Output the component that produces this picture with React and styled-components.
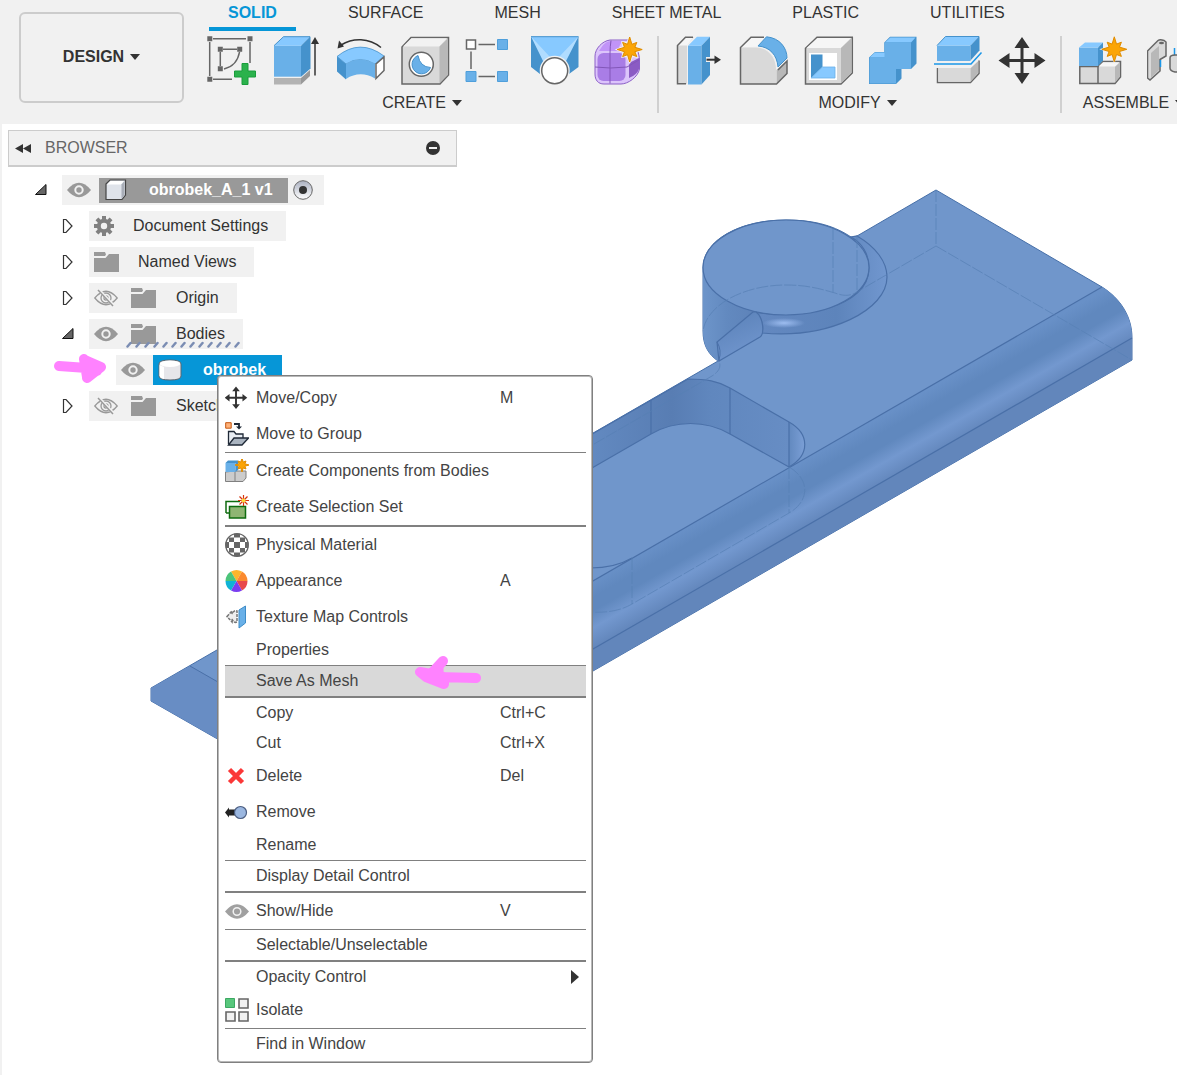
import React from 'react'
import styled, { createGlobalStyle, css } from 'styled-components'

const GlobalStyle = createGlobalStyle`
  * {
    box-sizing: border-box;
  }
  body {
    margin: 0;
    background: #fff;
    color: #333;
    font-family: 'Liberation Sans', Arial, sans-serif;
    font-size: 16px;
    line-height: 20px;
  }
  button {
    font: inherit;
    color: inherit;
    border: 0;
    padding: 0;
    background: none;
  }
  ul {
    list-style: none;
    margin: 0;
    padding: 0;
  }
  svg {
    display: block;
  }
`

/* ---------- toolbar icons ---------- */

const starPoints = (cx, cy, outer, inner) =>
  Array.from({ length: 16 }, (_, i) => {
    const r = i % 2 ? inner : i % 4 ? outer * 0.8 : outer
    const a = (Math.PI / 8) * i - Math.PI / 2
    return `${(cx + r * Math.cos(a)).toFixed(1)},${(cy + r * Math.sin(a)).toFixed(1)}`
  }).join(' ')

const Star = ({ cx, cy, r = 12 }) => (
  <polygon
    points={starPoints(cx, cy, r, r * 0.45)}
    fill='#fba506'
    stroke='#e08c00'
    strokeWidth='1'
  />
)

const SketchIcon = () => (
  <>
    <path
      d='M6 2.7H39M2.7 6V40M43 6V27M6 43.3H25M16 13.3H30M13.3 16V30M32.5 16C31 25 25 31 17 33'
      stroke='#666'
      strokeWidth='1.5'
      fill='none'
    />
    <path
      d='M.3.3h5v5h-5zM40.5.3h5v5h-5zM.3 40.8h5v5h-5zM10.8 10.8h5v5h-5zM30.2 10.8h5v5h-5zM10.8 30.2h5v5h-5z'
      fill='#666'
    />
    <path
      d='M35 27.5h6V35h7.5v6H41v7.5h-6V41h-7.5v-6H35z'
      fill='#2bb24c'
      stroke='#1a9c3c'
    />
  </>
)

const ExtrudeIcon = () => (
  <>
    <path d='M2 42h27v6.5H2z' fill='#b3b3b3' />
    <path d='M29 42l9-8v6l-9 8.500z' fill='#999' />
    <path d='M2 9.7h27v31H2z' fill='#69b0e8' />
    <path d='M2 9.7L11.5.7H38L29 9.7z' fill='#87c9ff' />
    <path d='M29 9.7L38 .7V33l-9 7.700z' fill='#4592cc' />
    <path d='M2 9.7L11.5.7H38V33' fill='none' stroke='#4592cc' />
    <path d='M43 39.5V6' stroke='#333' strokeWidth='1.5' />
    <path d='M43 1l4 7h-8z' fill='#333' />
  </>
)

const RevolveIcon = () => (
  <>
    <path
      d='M45 11.5C33 1.5 17 1.5 5 9'
      fill='none'
      stroke='#333'
      strokeWidth='1.5'
    />
    <path d='M1.5 12.5l1.500-8 5 6z' fill='#333' />
    <path
      d='M1 20.5Q24 2 48 20L39 28Q24 19 10 28z'
      fill='#87c9ff'
      stroke='#4592cc'
      strokeWidth='.8'
    />
    <path d='M10 28Q24 19 39 28V42.5Q24 34 10 43z' fill='#69b0e8' />
    <path d='M1 20.5L10 28V43.5L1 35.5z' fill='#4592cc' />
    <path
      d='M40 28L48 21V34.5L40 42.5z'
      fill='#fff'
      stroke='#666'
      strokeWidth='1.5'
    />
  </>
)

const HoleIcon = () => (
  <>
    <path
      d='M1 11L10 1.5H47.5V39L39 48H1z'
      fill='#d9d9d9'
      stroke='#666'
      strokeWidth='1.5'
    />
    <path d='M2 10.5L10.5 2.3H46L38.5 10.5z' fill='#f2f2f2' />
    <path d='M38.5 10.5L46.8 2.6V39l-8.300 8.300z' fill='#b8b8b8' />
    <circle cx='20.3' cy='28.3' r='12' fill='#fff' stroke='#666' strokeWidth='1.5' />
    <path
      d='M17 19.5A9.5 9.5 0 1 0 29.500 31.500Q19 31 17 19.500z'
      fill='#69b0e8'
      stroke='#4592cc'
    />
  </>
)

const PatternIcon = () => (
  <>
    <path d='M13.5 8.5H30M6 15.5V33M13.5 40.5H30' stroke='#666' strokeWidth='1.5' />
    <path d='M1.5 4h9v9h-9z' fill='#fff' stroke='#666' strokeWidth='1.5' />
    <path
      d='M32.5 3.5h10v10h-10zM1 35.5h10v10H1zM32.5 35.5h10v10h-10z'
      fill='#69b0e8'
      stroke='#4f9fdb'
    />
  </>
)

const LoftIcon = () => (
  <>
    <path d='M1 .5H48.5L39 37H11z' fill='#87c9ff' />
    <path d='M1 .5L16 23 10 38 1 31zM48.5.5L33 23l6 15 9.500-7z' fill='#4592cc' />
    <path d='M1 .5L20 21l-6 6zM48.5.5L29 21l6 6z' fill='#b0dcff' />
    <path d='M1 .7H48.5' stroke='#4592cc' />
    <circle cx='24.7' cy='34.7' r='15' fill='#f1f1f1' />
    <circle cx='24.7' cy='34.7' r='13' fill='#fff' stroke='#666' strokeWidth='1.5' />
  </>
)

const FormIcon = () => (
  <>
    <path
      d='M1 20C1 13 8 5 16 4H36C42 8 45.5 18 45.5 24V33C44 41 34 48 27 48H10C4 48 1 44 1 38z'
      fill='#dcc4fb'
      stroke='#8b5fc7'
    />
    <path d='M7 12Q11 5 17 5H28L23 15H5z' fill='#c194f8' />
    <rect x='3.5' y='17' width='28' height='28' rx='6' fill='#a97de6' />
    <path d='M35 27l10-5v11q-2 6-10 9z' fill='#8b5bc4' />
    <path d='M17 4.5q-1 6-1 13v30M1 31q15 2 32 0l12-7' stroke='#8257b8' fill='none' />
    <polygon points={starPoints(35.7, 13.5, 15, 8)} fill='#f1f1f1' />
    <Star cx={35.7} cy={13.5} r={12.5} />
  </>
)

const PressPullIcon = () => (
  <>
    <path d='M2.5 48V9.5L10.5 1H19L12 9V48z' fill='#d9d9d9' />
    <path d='M3 9.5L10.5 1.5H18L12 9.5z' fill='#f6f6f6' />
    <path
      d='M11 47.8H2.5V9.5L10.5 1.2H18'
      stroke='#666'
      strokeWidth='1.5'
      fill='none'
    />
    <path d='M13 9.7H26.5V48.5H13z' fill='#69b0e8' />
    <path d='M13 9.7L22 .7H35L26.5 9.7z' fill='#87c9ff' />
    <path d='M26.5 9.7L35 .7V39l-8.500 9.500z' fill='#4592cc' />
    <path d='M31 21h8v5h-8z' fill='#f1f1f1' />
    <path d='M31.5 23.7H41' stroke='#333' strokeWidth='2' />
    <path d='M39.5 19.5l6.500 4.200-6.500 4.200z' fill='#333' />
  </>
)

const FilletIcon = () => (
  <>
    <path d='M1.5 11.5L12 1.2H26L18 10.5z' fill='#f6f6f6' />
    <path d='M1.5 11.5H17C30 12 37 22 37 34V48H1.5z' fill='#d9d9d9' />
    <path d='M37.5 34L48 25V37.5L37.5 48z' fill='#b8b8b8' />
    <path
      d='M25 1.2H12L1.5 11.5V48H37.5L48 37.5V25L39 34'
      fill='none'
      stroke='#666'
      strokeWidth='1.5'
    />
    <path
      d='M19 10L27.5.8C41 2 48 12 48 22L39 31C38 19 31 11 19 10z'
      fill='#69b0e8'
      stroke='#4592cc'
    />
  </>
)

const ShellIcon = () => (
  <>
    <path
      d='M1.5 12.3L13 1.2H48.3V37L37 48H1.5z'
      fill='#d9d9d9'
      stroke='#666'
      strokeWidth='1.5'
    />
    <path d='M2.5 12L13.5 2H47L37 12z' fill='#f6f6f6' />
    <path d='M37 12L47.6 2V36.5L37 47.2z' fill='#b8b8b8' />
    <path d='M5 17H33V44H5z' fill='#fff' />
    <path d='M7 18.5h11.500V31L7 42z' fill='#4592cc' />
    <path d='M7 42L18.5 31H31V42z' fill='#87c9ff' stroke='#69b0e8' strokeWidth='.8' />
  </>
)

const CombineIcon = () => (
  <>
    <path
      d='M1 21.5L7 16H16.3V6.5L22 .8H48.5V27.5L43 33H33.5V42.5L28 48H1z'
      fill='#4592cc'
    />
    <path d='M1.5 21.5L7 16.5H17V21.5zM17 6.5L22.3 1.5H47.5L43 6.5z' fill='#87c9ff' />
    <path d='M1.5 21.5H16.5V6.5H43V33H28V47.5H1.5z' fill='#69b0e8' />
  </>
)

const SplitIcon = () => (
  <>
    <path d='M4 9.5H37.5V25H4z' fill='#69b0e8' />
    <path d='M4 9.5L12.5.5H46L37.5 9.5z' fill='#87c9ff' />
    <path d='M37.5 9.5L46 .5V15l-8.500 9.500z' fill='#4592cc' />
    <path d='M4 9.5L12.5.5H46V15' fill='none' stroke='#4592cc' />
    <path d='M1 28H38L48.5 16.5' fill='none' stroke='#1a96e8' strokeWidth='1.5' />
    <path
      d='M4.5 32V46.5H37.5L46 37.5V24.5'
      fill='none'
      stroke='#666'
      strokeWidth='1.5'
    />
    <path d='M5.3 32H37.5V45.7H5.3z' fill='#d9d9d9' />
    <path d='M37.5 32.3L45.3 25V37L37.5 45.7z' fill='#b8b8b8' />
  </>
)

const MoveIcon = () => (
  <>
    <path d='M25 8V41M9 24.5H41' stroke='#333' strokeWidth='3' />
    <path
      d='M25 1l7.500 11h-15zM25 48l7.500-11h-15zM1.500 24.500l11-7.500v15zM48.500 24.500l-11-7.500v15z'
      fill='#333'
    />
  </>
)

const ComponentIcon = () => (
  <>
    <path
      d='M1.8 30.5V47.5H37L42.5 41V25.5H25L20 30.5z'
      fill='#d9d9d9'
      stroke='#666'
      strokeWidth='1.5'
    />
    <path d='M20.5 30.5L25 26.3H41.5L37 30.5z' fill='#f6f6f6' />
    <path d='M37 31l4.800-4.500V40.500L37 46.800z' fill='#b8b8b8' />
    <path d='M20 30V47.5' stroke='#666' strokeWidth='1.5' />
    <path d='M1 11.5H20V30H1z' fill='#69b0e8' />
    <path d='M1 11.5L7 6.5H25L20 11.5z' fill='#87c9ff' />
    <path d='M20 11.5L25 6.5V24.5L20 30z' fill='#4592cc' />
    <polygon points={starPoints(36.3, 13.3, 15, 7)} fill='#f1f1f1' />
    <Star cx={36.3} cy={13.3} r={12.5} />
  </>
)

const JointIcon = () => (
  <g transform='translate(-5)'>
    <path
      d='M5.5 15L16 4.5Q18 3 22 4.5L24 6V20L18 23.5V35L8 44L5.5 42z'
      fill='#d9d9d9'
      stroke='#666'
      strokeWidth='1.5'
    />
    <path d='M9 17L17 10V34L9 42z' fill='#b8b8b8' />
    <ellipse cx='19.5' cy='7' rx='2.5' ry='1.2' fill='#666' />
    <path d='M18.5 24V31M32.5 12V20' stroke='#1a96e8' strokeWidth='1.5' />
    <path
      d='M28 22Q28 19 33 19H40V36H33Q28 35 28 32z'
      fill='#d9d9d9'
      stroke='#666'
      strokeWidth='1.5'
    />
  </g>
)

/* ---------- small icons ---------- */

const EyeIcon = ({ hidden }) => (
  <svg width='24' height='18' viewBox='0 0 24 18' aria-hidden='true'>
    {hidden ? (
      <g fill='none' stroke='#999' strokeWidth='1.3'>
        <path d='M.8 9Q12-4.500 23.200 9Q12 22.500.8 9z' />
        <circle cx='12' cy='9' r='5' />
        <circle cx='12' cy='9' r='2' />
        <path d='M5 1l15 16' stroke='#f1f1f1' strokeWidth='3' />
        <path d='M4 1l15 16' strokeWidth='1.5' />
      </g>
    ) : (
      <g>
        <path d='M0 9Q12-5.500 24 9Q12 23.500 0 9z' fill='#999' />
        <circle cx='12' cy='9' r='3.7' fill='none' stroke='#f1f1f1' strokeWidth='2' />
      </g>
    )}
  </svg>
)

const FolderIcon = () => (
  <svg width='25' height='20' viewBox='0 0 25 20' aria-hidden='true'>
    <path d='M0 0H11L12 2.5 11 4H0z' fill='#999' />
    <path d='M0 6H11.5L15 2H25V20H0z' fill='#999' />
  </svg>
)

const GearIcon = () => (
  <svg width='20' height='20' viewBox='-10 -10 20 20' aria-hidden='true'>
    <circle r='5.2' fill='none' stroke='#808080' strokeWidth='4' />
    {[0, 45, 90, 135].map((a) => (
      <path
        key={a}
        d='M-2-10H2V-6H-2zM-2 10H2V6H-2z'
        fill='#808080'
        transform={`rotate(${a})`}
      />
    ))}
  </svg>
)

const CubeIcon = () => (
  <svg width='22' height='22' viewBox='0 0 22 22' aria-hidden='true'>
    <path d='M1 5L5 1H20.5V16L17 20.5H1z' fill='#dfe3ea' stroke='#444' strokeWidth='1.2' />
    <path d='M2 5.5L5.5 2H19L16 5.5z' fill='#fff' />
    <path d='M16.5 5.5l3-3.500v14l-3 4z' fill='#a9aeb8' />
  </svg>
)

const CylinderIcon = () => (
  <svg width='24' height='22' viewBox='0 0 24 22' aria-hidden='true'>
    <path
      d='M1 5Q1 1 12 1T23 5V17Q23 21 12 21T1 17z'
      fill='#e6e6ea'
      stroke='#5c6670'
    />
    <path d='M1.5 6V16.5Q2 19 6 20V8z' fill='#fff' />
    <ellipse cx='12' cy='4.8' rx='10.2' ry='3.2' fill='#fff' />
  </svg>
)

const TargetIcon = () => (
  <svg width='20' height='20' viewBox='0 0 20 20' aria-hidden='true'>
    <defs>
      <linearGradient id='target' x1='0' y1='0' x2='0' y2='1'>
        <stop offset='0' stopColor='#aab0c0' />
        <stop offset='1' stopColor='#fff' />
      </linearGradient>
    </defs>
    <circle cx='10' cy='10' r='9.3' fill='url(#target)' stroke='#666' />
    <circle cx='10' cy='10' r='4' fill='#333' />
  </svg>
)

const Twisty = ({ open }) => (
  <svg width='12' height='16' viewBox='0 0 12 16' aria-hidden='true'>
    {open ? (
      <path d='M.5 12.5H11V2.5z' fill='#666' stroke='#111' />
    ) : (
      <path d='M1.5 1.5H4L10 8 4 14.5H1.5z' fill='#fff' stroke='#333' strokeWidth='1.2' />
    )}
  </svg>
)

/* ---------- menu icons, all on a 24px grid ---------- */

const menuIcons = {
  move: (
    <g transform='translate(-1 0) scale(.48)'>
      <path d='M25 6V43M7 24.5H43' stroke='#333' strokeWidth='4' />
      <path
        d='M25 1l8 10H17zM25 48l8-10H17zM1.500 24.500l10-8v16zM48.500 24.500l-10-8v16z'
        fill='#333'
      />
    </g>
  ),
  group: (
    <>
      <path d='M.7.7h5.500v5.500H.7z' fill='#ffb27a' stroke='#c4560f' />
      <path d='M9 2h5v3' fill='none' stroke='#1f2937' strokeWidth='1.8' />
      <path d='M11 4.500h6L14 7.500z' fill='#1f2937' />
      <path d='M3.500 22V9.500H9l2 2.500h7v4' fill='#e8edf3' stroke='#1f2937' strokeWidth='1.3' />
      <path d='M3.500 23L9 16H23.500L17 23z' fill='#aab4c0' stroke='#1f2937' strokeWidth='1.3' />
    </>
  ),
  components: (
    <>
      <path d='M.5 13v9.500H18L21 19V12H10z' fill='#ccc' stroke='#808080' />
      <path d='M10 13v9.500' stroke='#808080' />
      <path d='M.5 4h10v9H.5z' fill='#69b0e8' />
      <path d='M.5 4L3 1.500h10L10.500 4zM10.500 4L13 1.500V11l-2.500 2z' fill='#4592cc' />
      <Star cx={17} cy={6} r={7} />
    </>
  ),
  selection: (
    <>
      <path d='M1 18V6.500H15' fill='none' stroke='#0f6b0f' strokeWidth='1.5' />
      <path d='M1 18H4' stroke='#0f6b0f' strokeWidth='1.5' />
      <path d='M4.500 11.500h16V23h-16z' fill='#8fb573' stroke='#0f6b0f' strokeWidth='1.5' />
      <path
        d='M18.500 0V11M13 5.500H24M14.500 1.500l8 8M22.500 1.500l-8 8'
        stroke='#d8340f'
        strokeWidth='1.2'
      />
      <circle cx='18.5' cy='5.5' r='2' fill='#ffd93b' />
    </>
  ),
  material: (
    <>
      <circle cx='12' cy='12' r='11.3' fill='#fff' stroke='#666' strokeWidth='1.3' />
      <path
        d='M9 9h6v6H9zM4 4.500h5V9H4zM15 4.500h5V9h-5zM4 15h5v4.500H4zM15 15h5v4.500h-5zM9 .7h6v3.800H9zM9 19.500h6v3.800H9zM.7 9H4v6H.7zM20 9h3.300v6H20z'
        fill='#666'
      />
    </>
  ),
  appearance: (
    <>
      {['#fdb52b', '#fb8a2e', '#e8484b', '#7a3df0', '#0fb3d6', '#4cc47a'].map((c, i) => (
        <path
          key={c}
          d='M0 0L-5.500-9.500A11 11 0 0 1 5.500-9.500z'
          fill={c}
          transform={`translate(11.500 12) rotate(${i * 60})`}
        />
      ))}
    </>
  ),
  texture: (
    <>
      <path d='M14 5L20.500 1V18L14 23z' fill='#69b0e8' stroke='#3e8cc7' />
      <path
        d='M2 11.500L7 6V9Q9 4.500 12 6V17Q9 18.500 7 14V17z'
        fill='#eee'
        stroke='#777'
        strokeWidth='1.5'
        strokeDasharray='3 1'
      />
    </>
  ),
  remove: (
    <>
      <path d='M0 12.500l4-5v2h6v6H4v2z' fill='#222' />
      <circle cx='15.5' cy='12.5' r='6' fill='#9bb7e0' stroke='#4b5d80' strokeWidth='1.2' />
    </>
  ),
  delete: (
    <path
      d='M4.500 5.500L17.500 18.500M17.500 5.500L4.500 18.500'
      stroke='#fb3838'
      strokeWidth='4.5'
    />
  ),
  eye: (
    <>
      <path d='M0 12.500Q12-2 24 12.500Q12 27 0 12.500z' fill='#a0a0a0' />
      <circle cx='12' cy='12.5' r='3.8' fill='none' stroke='#f1f1f1' strokeWidth='1.5' />
    </>
  ),
  isolate: (
    <>
      <path d='M.5.5h9v9h-9z' fill='#58c77c' stroke='#3da863' />
      <path
        d='M14 1h9v9h-9zM1 14h9v9H1zM14 14h9v9h-9z'
        fill='#f1f1f1'
        stroke='#666'
        strokeWidth='1.6'
      />
    </>
  ),
}

/* ---------- data ---------- */

const tabs = ['SOLID', 'SURFACE', 'MESH', 'SHEET METAL', 'PLASTIC', 'UTILITIES']

const groups = [
  {
    name: 'CREATE',
    width: 437,
    tools: [
      ['Create Sketch', SketchIcon],
      ['Extrude', ExtrudeIcon],
      ['Revolve', RevolveIcon],
      ['Hole', HoleIcon],
      ['Rectangular Pattern', PatternIcon],
      ['Loft', LoftIcon],
      ['Create Form', FormIcon],
    ],
  },
  {
    name: 'MODIFY',
    width: 372,
    tools: [
      ['Press Pull', PressPullIcon],
      ['Fillet', FilletIcon],
      ['Shell', ShellIcon],
      ['Combine', CombineIcon],
      ['Split Body', SplitIcon],
      ['Move', MoveIcon],
    ],
  },
  {
    name: 'ASSEMBLE',
    width: 119,
    tools: [
      ['New Component', ComponentIcon],
      ['Joint', JointIcon],
    ],
  },
]

const menu = [
  { label: 'Move/Copy', icon: 'move', keys: 'M' },
  { label: 'Move to Group', icon: 'group' },
  { line: 1 },
  { label: 'Create Components from Bodies', icon: 'components' },
  { label: 'Create Selection Set', icon: 'selection' },
  { line: 2 },
  { label: 'Physical Material', icon: 'material' },
  { label: 'Appearance', icon: 'appearance', keys: 'A' },
  { label: 'Texture Map Controls', icon: 'texture' },
  { label: 'Properties' },
  { line: 1 },
  { label: 'Save As Mesh', active: true },
  { line: 2 },
  { label: 'Copy', keys: 'Ctrl+C' },
  { label: 'Cut', keys: 'Ctrl+X' },
  { label: 'Delete', icon: 'delete', keys: 'Del' },
  { label: 'Remove', icon: 'remove' },
  { label: 'Rename' },
  { line: 1 },
  { label: 'Display Detail Control' },
  { line: 2 },
  { label: 'Show/Hide', icon: 'eye', keys: 'V' },
  { line: 1 },
  { label: 'Selectable/Unselectable' },
  { line: 2 },
  { label: 'Opacity Control', submenu: true },
  { label: 'Isolate', icon: 'isolate' },
  { line: 1 },
  { label: 'Find in Window' },
]

/* ---------- components ---------- */

function Toolbar() {
  return (
    <Header>
      <DesignButton>
        DESIGN
        <Caret />
      </DesignButton>
      <Ribbon>
        <Tabs role='tablist'>
          {tabs.map((tab, i) => (
            <Tab key={tab} role='tab' $active={i === 0} aria-selected={i === 0}>
              {tab}
            </Tab>
          ))}
        </Tabs>
        <Groups>
          {groups.map(({ name, width, tools }) => (
            <Group key={name} $width={width}>
              <Tools>
                {tools.map(([title, Icon]) => (
                  <Tool key={title} aria-label={title}>
                    <svg width='50' height='50' viewBox='0 0 50 50' aria-hidden='true'>
                      <Icon />
                    </svg>
                  </Tool>
                ))}
              </Tools>
              <GroupLabel>
                {name}
                <Caret />
              </GroupLabel>
            </Group>
          ))}
        </Groups>
      </Ribbon>
    </Header>
  )
}

function Model() {
  return (
    <Canvas
      viewBox='2 124 1175 951'
      preserveAspectRatio='xMinYMin meet'
      role='img'
      aria-label='obrobek model'
    >
      <defs>
        <linearGradient id='band' gradientUnits='userSpaceOnUse' x1='594' y1='580' x2='623' y2='631'>
          <stop offset='0' stopColor='#6890c7' />
          <stop offset='.25' stopColor='#6088be' />
          <stop offset='.45' stopColor='#6088be' />
          <stop offset='.7' stopColor='#7398cf' />
          <stop offset='1' stopColor='#6387bc' />
        </linearGradient>
        <linearGradient id='side' x1='0' x2='1' y1='0' y2='0'>
          <stop offset='0' stopColor='#6d95ca' />
          <stop offset='.3' stopColor='#6289bf' />
          <stop offset='.75' stopColor='#5c80b6' />
          <stop offset='1' stopColor='#5c80b6' />
        </linearGradient>
        <linearGradient id='rib' x1='.3' x2='.7' y1='0' y2='1'>
          <stop offset='0' stopColor='#5b82b9' />
          <stop offset='1' stopColor='#7398d0' />
        </linearGradient>
        <linearGradient id='wall' gradientUnits='userSpaceOnUse' x1='594' x2='789' y1='0' y2='0'>
          <stop offset='0' stopColor='#6289c0' />
          <stop offset='.4' stopColor='#587db3' />
          <stop offset='.6' stopColor='#6087be' />
          <stop offset='1' stopColor='#678dc4' />
        </linearGradient>
        <linearGradient id='corner' x1='0' x2='1' y1='0' y2='0'>
          <stop offset='0' stopColor='#6289bf' />
          <stop offset='1' stopColor='#7b9fd6' />
        </linearGradient>
        <linearGradient id='ring' gradientUnits='userSpaceOnUse' x1='762' x2='887' y1='0' y2='0'>
          <stop offset='0' stopColor='#6388c0' />
          <stop offset='.6' stopColor='#5d84bb' />
          <stop offset='1' stopColor='#7197cf' />
        </linearGradient>
        <radialGradient id='shine'>
          <stop offset='0' stopColor='#9dbdf0' />
          <stop offset='1' stopColor='#9dbdf0' stopOpacity='0' />
        </radialGradient>
      </defs>
      <path
        d='M936 190L1102 287C1121 299 1132 317 1132 338V360L340 817V809L151 701V688L718 361C708 354 703 345 703 331V268C703 240 740 220 786 220C817 220 836 227 851 237Q854 238 857 236z'
        fill='#7096cb'
        stroke='#466fa8'
      />
      <path d='M151 688L190 666L340 752V809L151 701z' fill='#688dc4' />
      <path d='M190 666L340 752' stroke='#4a70a8' />
      <path d='M1102 287C1121 299 1132 317 1132 338L340 795V727z' fill='url(#band)' />
      <path d='M1132 338V360L340 817V795z' fill='#6286bb' />
      <g fill='none' stroke='#4a70a8' strokeWidth='1.2'>
        <path d='M1102 287L340 727M1132 338L340 795' />
      </g>

      {/* pocket */}
      <path
        d='M500 487L688 379C706 379 718 381 730 388L789 422V467L730 434C706 420 675 420 651 434L500 521z'
        fill='url(#wall)'
      />
      <path d='M789 422C810 434 810 455 789 467z' fill='url(#corner)' />
      <g fill='none' stroke='#4a70a8' strokeWidth='1.2'>
        <path d='M500 487L688 379C706 379 718 381 730 388L789 422C810 434 810 455 789 467' />
        <path d='M500 521L651 434C675 420 706 420 730 434L789 467' />
        <path d='M651 400V434M730 388V434M789 422V467M632 558C620 565 608 568 590 568' />
      </g>

      {/* boss */}
      <path d='M703 268V331C703 345 708 354 718 361L762 334L763 315L786 315z' fill='url(#side)' />
      <path
        d='M857 236C876 247 887 262 887 277C887 310 830 339 762 333C764 323 761 316 753 312C800 320 869 308 869 268C869 254 862 243 851 237z'
        fill='url(#ring)'
        stroke='#4a70a8'
        strokeWidth='1.2'
      />
      <ellipse cx='784' cy='323' rx='21' ry='5' fill='url(#shine)' />
      <ellipse
        cx='786'
        cy='267.5'
        rx='83'
        ry='47.5'
        fill='#7096cb'
        stroke='#4a70a8'
        strokeWidth='1.2'
      />
      <path
        d='M753 312L717 342L719 361L760 337C765 333 763 317 756 312z'
        fill='url(#rib)'
        stroke='#4a70a8'
        strokeWidth='1.2'
      />
      <path d='M717 342Q722 350 719 360V361' fill='none' stroke='#4a70a8' />

      {/* hidden edges */}
      <g fill='none' stroke='#5780b5' strokeDasharray='12 2' opacity='.7'>
        <path d='M936 190V246L1132 360M936 246L862 289C852 296 846 297 835 293C818 288 805 285 786 285C745 285 707 304 703 331' />
        <path d='M833 228V293M857 236V292' />
        <path d='M594 444L712 376C720 371 721 366 719 361' />
        <path d='M789 467V513M789 467C810 479 810 501 789 513L632 604C620 611 606 613 590 612M632 558V604' />
      </g>
    </Canvas>
  )
}

function BrowserTree() {
  return (
    <nav aria-label='Browser'>
      <PanelTitle>
        <svg width='16' height='9' viewBox='0 0 16 9' aria-hidden='true'>
          <path d='M8 0V9L0 4.5zM16 0V9L8 4.5z' fill='#333' />
        </svg>
        <span>BROWSER</span>
        <CollapseButton aria-label='Collapse'>
          <svg width='14' height='14' viewBox='0 0 14 14' aria-hidden='true'>
            <circle cx='7' cy='7' r='7' fill='#333' />
            <path d='M3 7H11' stroke='#f1f1f1' strokeWidth='2' />
          </svg>
        </CollapseButton>
      </PanelTitle>
      <Tree>
        <Node $level={0}>
          <Twist aria-label='Collapse obrobek_A_1'><Twisty open /></Twist>
          <NodeBox>
            <Cell $width={37}><EyeIcon /></Cell>
            <RootName>
              <CubeIcon />
              obrobek_A_1 v1
            </RootName>
            <Cell $width={36}><TargetIcon /></Cell>
          </NodeBox>
        </Node>
        <Node $level={1}>
          <Twist aria-label='Expand Document Settings'><Twisty /></Twist>
          <NodeBox>
            <Cell $width={32}><GearIcon /></Cell>
            <Name $gap={12}>Document Settings</Name>
          </NodeBox>
        </Node>
        <Node $level={1}>
          <Twist aria-label='Expand Named Views'><Twisty /></Twist>
          <NodeBox>
            <Cell $width={37}><FolderIcon /></Cell>
            <Name $gap={12}>Named Views</Name>
          </NodeBox>
        </Node>
        <Node $level={1}>
          <Twist aria-label='Expand Origin'><Twisty /></Twist>
          <NodeBox>
            <Cell $width={37}><EyeIcon hidden /></Cell>
            <Cell $width={34}><FolderIcon /></Cell>
            <Name $gap={16}>Origin</Name>
          </NodeBox>
        </Node>
        <Node $level={1}>
          <Twist aria-label='Collapse Bodies'><Twisty open /></Twist>
          <NodeBox>
            <Cell $width={37}><EyeIcon /></Cell>
            <Cell $width={34}><FolderIcon /></Cell>
            <Name $gap={16}>Bodies</Name>
            <DropHint width='114' height='7' viewBox='0 0 114 7' aria-hidden='true'>
              {Array.from({ length: 13 }, (_, i) => (
                <path
                  key={i}
                  d={`M${i * 9 + 1.5} 5.5l3-3.500`}
                  stroke='#7b8db3'
                  strokeWidth='2.5'
                  strokeLinecap='round'
                />
              ))}
            </DropHint>
          </NodeBox>
        </Node>
        <Node $level={2}>
          <NodeBox>
            <Cell $width={37}><EyeIcon /></Cell>
            <SelectedName>
              <CylinderIcon />
              obrobek
            </SelectedName>
          </NodeBox>
        </Node>
        <Node $level={1}>
          <Twist aria-label='Expand Sketches'><Twisty /></Twist>
          <NodeBox>
            <Cell $width={37}><EyeIcon hidden /></Cell>
            <Cell $width={34}><FolderIcon /></Cell>
            <Name $gap={16}>Sketches</Name>
          </NodeBox>
        </Node>
      </Tree>
    </nav>
  )
}

function ContextMenu() {
  return (
    <Menu role='menu'>
      {menu.map((item, i) =>
        item.line ? (
          <Line key={i} $size={item.line} />
        ) : (
          <MenuItem key={i} role='menuitem' $tall={!!item.icon} $active={item.active}>
            {item.icon ? (
              <svg width='24' height='24' viewBox='0 0 24 24' aria-hidden='true'>
                {menuIcons[item.icon]}
              </svg>
            ) : (
              <span />
            )}
            <span>{item.label}</span>
            {item.submenu ? (
              <SubmenuArrow width='8' height='14' viewBox='0 0 8 14' aria-hidden='true'>
                <path d='M0 0L8 7 0 14z' fill='#333' />
              </SubmenuArrow>
            ) : (
              <span>{item.keys}</span>
            )}
          </MenuItem>
        )
      )}
    </Menu>
  )
}

function App() {
  return (
    <Page>
      <GlobalStyle />
      <Toolbar />
      <Workspace>
        <Model />
        <BrowserTree />
        <ContextMenu />
        <Marker $left={51} $top={229} width='54' height='32' viewBox='0 0 54 32' aria-hidden='true'>
          <path
            d='M6 13L34 15M31 6L34 24M32 7L48 14L34 25M34 8L44 18'
            fill='none'
            stroke='#ff82ff'
            strokeWidth='10'
            strokeLinecap='round'
            strokeLinejoin='round'
          />
        </Marker>
        <Marker $left={412} $top={531} width='68' height='36' viewBox='0 0 68 36' aria-hidden='true'>
          <path
            d='M62 23L24 22M29 6L17 19L6 17L12 22L30 29V22'
            fill='#ff82ff'
            stroke='#ff82ff'
            strokeWidth='10'
            strokeLinecap='round'
            strokeLinejoin='round'
          />
        </Marker>
      </Workspace>
    </Page>
  )
}

/* ---------- styles ---------- */

const Page = styled.div`
  display: flex;
  flex-direction: column;
  min-height: 100vh;
`

const Header = styled.header`
  display: flex;
  align-items: flex-start;
  gap: 23px;
  padding: 0 0 11px 19px;
  background: #f1f1f1;
  overflow: hidden;
`

const Caret = styled.span`
  display: inline-block;
  margin-left: 6px;
  vertical-align: 2px;
  border: 5px solid transparent;
  border-top: 6px solid #333;
  border-bottom: 0;
`

const DesignButton = styled.button`
  flex: none;
  width: 165px;
  height: 91px;
  margin-top: 12px;
  padding-bottom: 2px;
  border: 2px solid #ccc;
  border-radius: 6px;
  font-weight: bold;
`

const Ribbon = styled.div`
  flex: 1;
  min-width: 0;
`

const Tabs = styled.div`
  display: flex;
  gap: 33px;
  padding-left: 2px;
`

const Tab = styled.button`
  flex: none;
  height: 31px;
  padding: 0 19px 2px;
  border-bottom: 4px solid ${(p) => (p.$active ? '#0696d7' : 'transparent')};
  color: ${(p) => (p.$active ? '#0696d7' : '#333')};
  font-weight: ${(p) => (p.$active ? 'bold' : 'normal')};
`

const Groups = styled.div`
  display: flex;
  margin-top: 5px;
`

const Group = styled.section`
  flex: none;
  box-sizing: content-box;
  width: ${(p) => p.$width}px;
  height: 77px;
  padding-right: 13px;
  border-right: 2px solid #d0d0d0;

  & + & {
    padding-left: 16px;
  }
`

const Tools = styled.div`
  display: flex;
  justify-content: space-between;
`

const Tool = styled.button`
  flex: none;
  width: 50px;
  height: 50px;
`

const GroupLabel = styled.button`
  display: block;
  margin: 7px auto 0;
  padding-right: 7px;
`

const Workspace = styled.main`
  position: relative;
  flex: 1;
  min-height: 951px;
  padding: 6px;
  border-left: 2px solid #f1f1f1;
`

// drawing surface that lies under the panels
const Canvas = styled.svg`
  position: absolute;
  inset: 0;
  width: 100%;
  height: 100%;
`

const PanelTitle = styled.div`
  position: relative;
  display: flex;
  align-items: center;
  gap: 14px;
  width: 449px;
  height: 37px;
  padding: 0 16px 0 6px;
  background: #f1f1f1;
  border: 1px solid #ccc;
  border-bottom-width: 2px;
  color: #666;
`

const CollapseButton = styled.button`
  margin-left: auto;
`

const Tree = styled.ul`
  position: relative;
  display: flex;
  flex-direction: column;
  gap: 6px;
  margin-top: 8px;
`

const Node = styled.li`
  display: flex;
  align-items: center;
  height: 30px;
  padding-left: ${(p) => (p.$level === 2 ? 108 : 27 + p.$level * 27)}px;
`

const Twist = styled.button`
  width: 27px;
`

const NodeBox = styled.div`
  position: relative;
  display: flex;
  align-items: center;
  height: 30px;
  background: #f1f1f1;
`

const Cell = styled.span`
  display: flex;
  flex: none;
  align-items: center;
  width: ${(p) => p.$width}px;
  height: 30px;
  padding-left: 5px;
`

const Name = styled.span`
  padding: 0 18px 0 ${(p) => p.$gap}px;
`

const boldName = css`
  display: flex;
  align-items: center;
  color: #fff;
  font-weight: bold;
`

const RootName = styled.span`
  ${boldName}
  gap: 22px;
  height: 25px;
  padding: 0 15px 0 6px;
  background: #999;
`

const SelectedName = styled.span`
  ${boldName}
  gap: 21px;
  height: 30px;
  padding: 0 16px 0 5px;
  background: #0696d7;
`

// insertion mark drawn over the lower edge of a row
const DropHint = styled.svg`
  position: absolute;
  left: 37px;
  bottom: 1px;
`

const Menu = styled.div`
  position: absolute;
  left: 215px;
  top: 251px;
  display: flex;
  flex-direction: column;
  width: 376px;
  padding: 4px 6px 3px 7px;
  background: #fff;
  border: 1px solid #808080;
  border-radius: 4px;
  box-shadow: inset 0 0 0 1px #b8b8b8;
`

const MenuItem = styled.button`
  display: grid;
  grid-template-columns: 24px 1fr 86px;
  column-gap: 7px;
  align-items: center;
  height: ${(p) => (p.$tall ? 36 : 30)}px;
  text-align: left;
  color: #444;
  background: ${(p) => (p.$active ? '#d9d9d9' : 'transparent')};
`

const Line = styled.div`
  height: ${(p) => p.$size}px;
  background: #808080;
`

const SubmenuArrow = styled.svg`
  justify-self: end;
  margin-right: 7px;
`

// hand-drawn arrows lying over the tree and the menu
const Marker = styled.svg`
  position: absolute;
  left: ${(p) => p.$left}px;
  top: ${(p) => p.$top}px;
`

export default App
